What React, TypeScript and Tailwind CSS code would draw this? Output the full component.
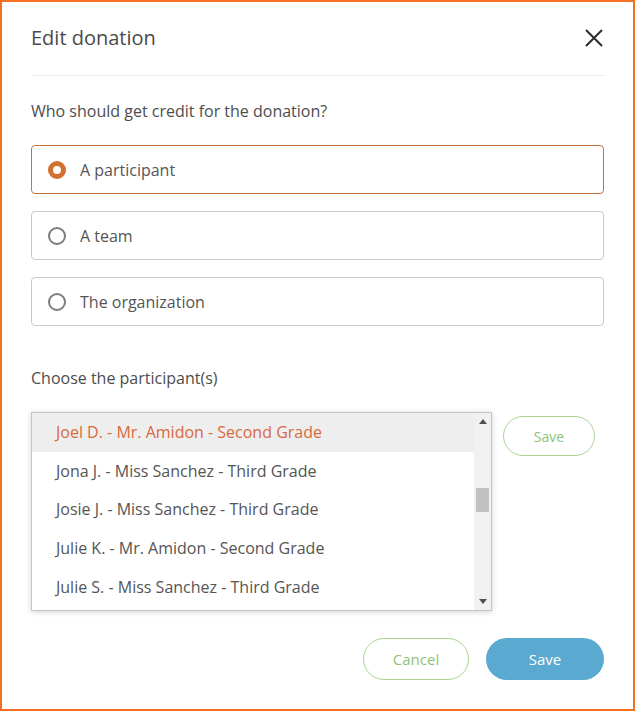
export default function App() {
  const options = [
    { label: "A participant", selected: true },
    { label: "A team", selected: false },
    { label: "The organization", selected: false },
  ];
  const participants = [
    "Joel D. - Mr. Amidon - Second Grade",
    "Jona J. - Miss Sanchez - Third Grade",
    "Josie J. - Miss Sanchez - Third Grade",
    "Julie K. - Mr. Amidon - Second Grade",
    "Julie S. - Miss Sanchez - Third Grade",
  ];

  return (
    <div className="w-[635px] h-[711px] border-2 border-[#f37021] bg-white pl-[29px] pr-[29px] pt-[22px] font-['Open_Sans',sans-serif] text-[#555]">
      <div className="flex items-center justify-between pb-[23px] border-b border-[#ececec]">
        <h1 className="text-[20px] leading-[28px] text-[#4a4a4a]">Edit donation</h1>
        <svg width="18" height="18" viewBox="0 0 18 18" className="mr-[1px]">
          <path d="M1 1 L17 17 M17 1 L1 17" stroke="#2b2b2b" strokeWidth="2" />
        </svg>
      </div>

      <p className="mt-[23px] text-[16px] leading-[24px] font-medium text-[#4d4d4d]">
        Who should get credit for the donation?
      </p>

      <div className="mt-[22px] flex flex-col gap-[17px]">
        {options.map((o, i) => (
          <div
            key={i}
            className={`h-[49px] flex items-center gap-[14px] pl-[16px] rounded-[4px] border ${
              o.selected ? "border-[#c8733a]" : "border-[#c9c9cc]"
            }`}
          >
            {o.selected ? (
              <span className="w-[18px] h-[18px] rounded-full border-[5px] border-[#d2702f] bg-white" />
            ) : (
              <span className="w-[18px] h-[18px] rounded-full border-2 border-[#7a7d82] bg-white" />
            )}
            <span className="text-[16px] leading-[24px] text-[#555]">{o.label}</span>
          </div>
        ))}
      </div>

      <p className="mt-[40px] text-[16px] leading-[24px] font-medium text-[#4d4d4d]">
        Choose the participant(s)
      </p>

      <div className="mt-[22px] flex items-start gap-[11px]">
        <div className="relative w-[461px] h-[199px] border border-[#c5c5c8] shadow-[0_1px_6px_rgba(0,0,0,0.18)] overflow-hidden flex">
          <div className="flex-1">
            {participants.map((p, i) => (
              <div
                key={i}
                className={`h-[38.6px] flex items-center pl-[24px] text-[16px] ${
                  i === 0 ? "bg-[#eeeeee] text-[#d8693c]" : "text-[#555]"
                }`}
              >
                {p}
              </div>
            ))}
          </div>
          <div className="w-[17px] bg-[#f1f1f1] flex flex-col items-center justify-between py-[6px]">
            <svg width="8" height="5" viewBox="0 0 8 5">
              <path d="M0 5 L4 0 L8 5 Z" fill="#505050" />
            </svg>
            <svg width="8" height="5" viewBox="0 0 8 5">
              <path d="M0 0 L4 5 L8 0 Z" fill="#505050" />
            </svg>
          </div>
          <div className="absolute right-[2px] top-[75px] w-[13px] h-[24px] bg-[#c1c1c1]" />
        </div>
        <button className="mt-[4px] w-[92px] h-[40px] rounded-full border border-[#a9d494] text-[14px] text-[#8dc27a]">
          Save
        </button>
      </div>

      <div className="mt-[27px] flex justify-end gap-[17px]">
        <button className="w-[106px] h-[42px] rounded-full border border-[#a9d494] text-[15px] text-[#8dc27a]">
          Cancel
        </button>
        <button className="w-[118px] h-[42px] rounded-full bg-[#59a9d1] text-[15px] text-white">
          Save
        </button>
      </div>
    </div>
  );
}
